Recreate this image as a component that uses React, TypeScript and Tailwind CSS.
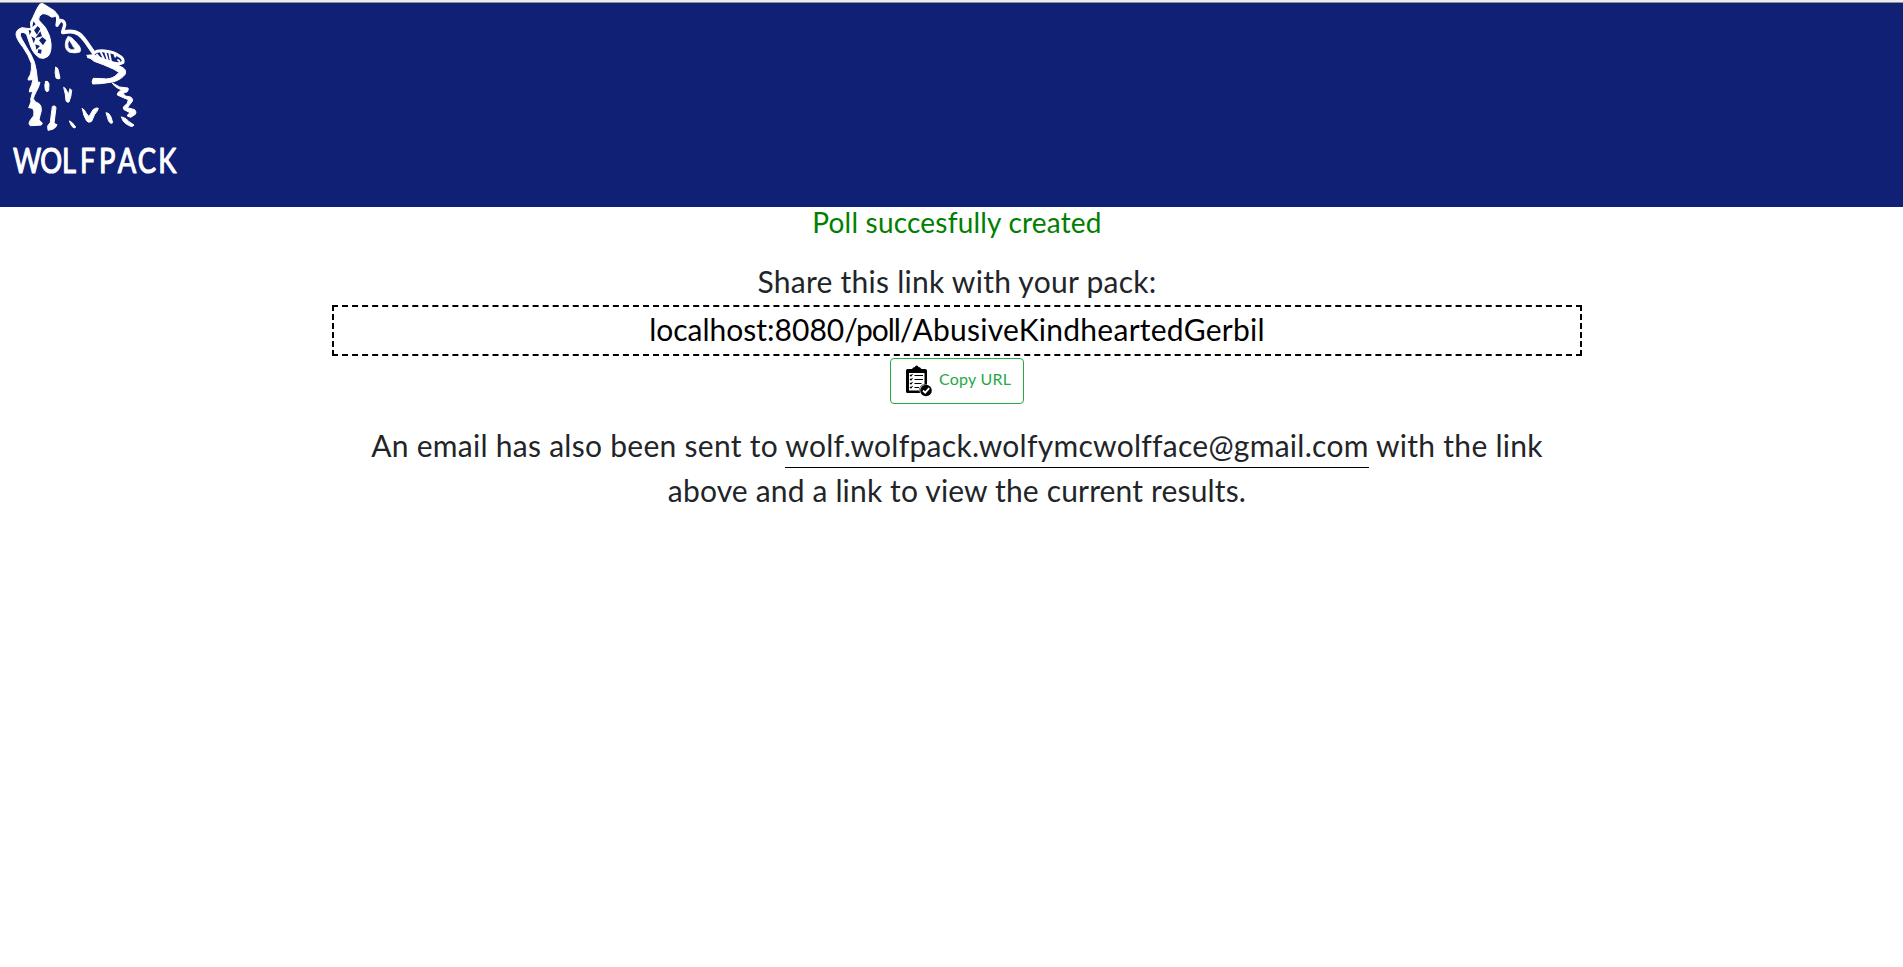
function Wolf() {
  return (
    <svg viewBox="0 9 420 396" className="block h-[132px] w-[140px]" fill="none" stroke="#fff" strokeLinecap="round" strokeLinejoin="round" aria-hidden="true">
      {/* muzzle and jaw */}
      <path fill="#fff" strokeWidth="3" d="M92 66 C102 48 108 28 119 13 Q126 7 134 14 L156 28 Q172 36 168 46 Q163 53 154 51 Q136 38 126 42 Q115 48 116 60 L136 82 Q152 108 153 130 Q155 156 144 169 Q132 179 118 173 Q98 160 90 134 L80 104 Q68 92 61 101 Q59 106 66 118 Q82 146 92 162 Q106 186 109 212 L113 246 L120 247 Q117 262 108 276 Q102 288 100 296 Q105 308 116 310 Q125 315 124 332 Q120 346 117 360 L127 369 Q127 377 116 376 L91 377 Q84 373 90 362 L101 347 Q104 334 98 325 L86 323 Q91 312 93 304 L92 298 Q96 284 98 274 L88 276 Q87 270 95 254 L99 239 L84 240 Q84 233 91 224 Q96 208 94 190 Q86 166 69 142 Q48 116 48 102 Q49 88 66 83 Q78 85 92 86 Z" />
      {/* gaps between the teeth */}
      <path fill="#102074" stroke="none" d="M100 64 L107 73 L97 81 Z M113 78 L121 86 L111 104 L102 91 Z M86 89 L94 93 L89 105 Z M121 94 L126 109 L106 114 L111 107 Z M94 109 L106 116 L101 130 Z M127 111 L139 121 L129 136 L117 121 Z M106 133 L120 138 L109 149 Z M115 148 L125 149 L123 161 L113 158 Z" />
      {/* brow and eye */}
      <path strokeWidth="10" d="M168 44 Q175 50 173 62 L171 76 L181 61 Q194 62 194 75 L188 96" />
      <path strokeWidth="12" d="M189 97 C216 92 234 94 248 113 C260 126 268 141 281 158" />
      <path fill="#fff" fillRule="evenodd" strokeWidth="2" d="M204 110 Q209 108 216 114 Q228 125 238 138 Q245 148 240 156 Q226 161 208 157 Q198 152 196 141 Q194 121 204 110 Z M207 120 Q201 131 205 143 Q213 153 225 147 Q222 140 219 140 Q218 136 215 132 Z" />
      {/* ear and back of the neck */}
      <path strokeWidth="9" d="M281 159 Q292 151 314 153 Q343 156 356 167 Q372 175 369 187 Q358 193 345 190 L317 182 L265 170" />
      <path strokeWidth="6" d="M291 164 L299 174 M303 158 L312 177 M316 157 L324 183 M328 160 L333 185 M344 164 L346 170 M354 180 L358 183" />
      <path fill="#fff" strokeWidth="3" d="M261 166 L282 164 L312 177 L346 191 L366 202 Q380 208 376 222 Q366 237 342 245 Q320 249 300 251 L278 252 Q274 245 280 235 L309 236 Q331 239 346 228 L357 217 L340 207 L310 194 L283 184 Z" />
      <path fill="#fff" strokeWidth="3" d="M337 249 L359 261 L384 264 Q387 267 382 275 L369 280 L376 288 L392 291 Q401 298 397 304 L386 318 L382 323 L404 329 Q411 336 406 343 L392 352 L382 348 L384 343 L392 339 L380 333 Q367 329 370 321 L382 310 L385 299 L370 293 L352 285 Q351 278 358 274 L367 270 Q354 267 345 259 Z" />
      <path fill="#fff" strokeWidth="3" d="M365 351 L378 356 L387 365 L402 375 Q401 380 392 379 Q378 374 370 364 Z" />
      {/* fur */}
      <path fill="#fff" strokeWidth="3" d="M167 202 Q174 202 175 211 L180 235 Q177 239 168 234 Q163 217 167 202 Z M137 244 Q144 240 147 252 L146 272 Q140 279 136 270 Q132 255 137 244 Z M192 262 Q199 264 205 284 L210 266 L215 271 Q214 289 207 306 Q200 308 198 302 L196 284 Z M158 319 Q166 315 168 323 L162 370 L171 374 Q169 383 158 388 L144 391 L143 378 L151 367 L154 342 Z M209 363 Q216 365 227 381 Q224 388 215 378 Z M247 326 Q252 325 259 340 L267 350 L279 329 Q290 321 295 325 Q293 334 284 343 L275 364 Q266 370 260 363 Q250 348 247 326 Z M319 338 Q327 337 333 351 L338 368 Q332 374 326 363 Z" />
    </svg>
  );
}

function Clipboard() {
  return (
    <svg viewBox="0 0 27 33" className="h-[33px] w-[27px]" aria-hidden="true">
      <path fillRule="evenodd" d="M2.5 4H7Q8 2 10 2Q10 .5 11.700.5T13.400 2Q15.400 2 16.400 4H20Q22 4 22 5.500V19.500Q15.500 19 14.500 25Q14.500 26.500 15 28H2.500Q1 28 1 26.500V5.500Q1 4 2.500 4ZM4 8V25.500H14Q14.500 20 19.500 19V8Z" />
      <path fill="none" stroke="#000" strokeWidth="1.1" d="M9.500 10.500h8.500M9.500 14.500h8.500M9.500 18.500h7M9.500 22.500h4.500M5 10l1 1 1.500-2M5 14l1 1 1.500-2M5 18l1 1 1.500-2M5 22l1 1 1.500-2" />
      <circle cx="21" cy="25.500" r="5.800" />
      <path d="M18 25.500l2.200 2.200 4-4.500" fill="none" stroke="#fff" strokeWidth="1.800" />
    </svg>
  );
}

export default function App() {
  return (
    <div className="min-h-screen bg-white font-['Lato','Open_Sans',sans-serif] text-[#212529]">
      <div className="h-[2px] bg-[#ececec]" />
      <header className="h-[205px] border-t border-[#8f8f98] bg-[#102074]">
        <Wolf />
        <svg viewBox="0 0 200 50" className="block h-[50px] w-[200px]" role="img" aria-label="WOLFPACK">
          <text y="38.500" transform="scale(.78 1)" x="16.700 51.500 79.500 102.500 127 151 176.500 203" fill="#fff" stroke="#fff" strokeWidth="1.200" strokeLinejoin="round" fontFamily="Lato, sans-serif" fontSize="35">WOLFPACK</text>
        </svg>
      </header>
      <main className="ml-[332px] flex w-[1250px] flex-col items-center whitespace-nowrap">
        <p className="h-[53px] text-[28px] leading-[30px] tracking-[0.2px] text-[#008000]">Poll succesfully created</p>
        <p className="-mt-px mb-px h-[45px] text-[30px] leading-[45px] tracking-[0.26px]">Share this link with your pack:</p>
        <div className="h-[51px] w-full border-2 border-dashed border-black text-center text-[30px] leading-[45px] text-black">
          localhost:8080<span className="tracking-[-1px]">/poll/</span><span className="tracking-[0.26px]">AbusiveKindheartedGerbil</span>
        </div>
        <button className="mt-[2px] flex h-[46px] w-[134px] rounded-[4px] border border-[#28a745] pt-[6px] pl-[14px] text-[16px] leading-[28px] tracking-[0.25px] text-[#28a745]">
          <Clipboard />
          <span className="ml-[7px]">Copy URL</span>
        </button>
        <p className="mt-[19px] text-center text-[30px] leading-[45px] tracking-[0.28px]">
          An email has also been sent to <span className="border-b border-black pb-[4px]">wolf.wolfpack.wolfymcwolfface@gmail.com</span> with the link
          <br />
          <span className="tracking-[0.16px]">above and a link to view the current results.</span>
        </p>
      </main>
    </div>
  );
}
